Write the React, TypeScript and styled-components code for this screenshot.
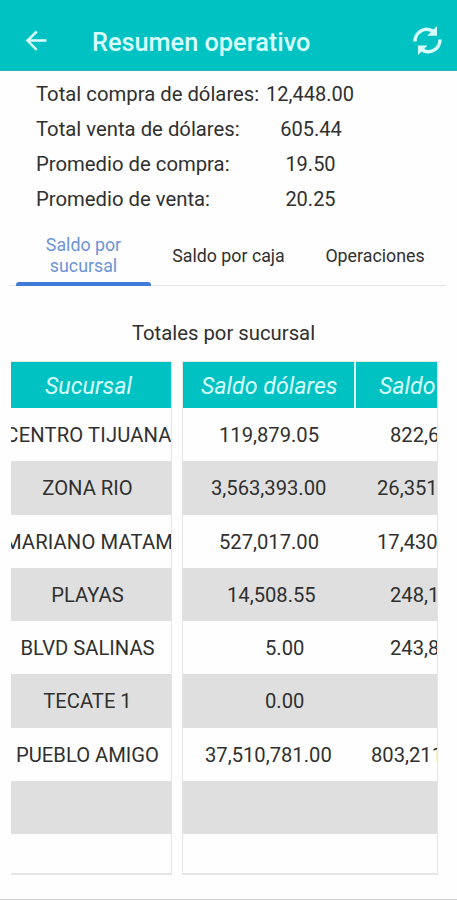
import React from "react";
import styled, { createGlobalStyle } from "styled-components";

const GlobalStyle = createGlobalStyle`
  * { box-sizing: border-box; }
  body { margin: 0; background: #fefefe; }
`;

const Screen = styled.div`
  display: flex;
  flex-direction: column;
  height: 900px;
  overflow: hidden;
  background: #fefefe;
  border-bottom: 1px solid #cfcfcf;
  color: #303030;
  font-family: Roboto, "Liberation Sans", sans-serif;
  font-size: 20.2px;
`;

const AppBar = styled.header`
  flex: none;
  display: flex;
  align-items: center;
  height: 71px;
  padding: 12px 14px 0 24px;
  background: #00c2c2;
  border-bottom: 1px solid #20b5b7;
  color: #d8ffff;
`;

const Title = styled.h1`
  flex: 1;
  margin: 3px 0 0 44px;
  font-size: 25.3px;
  font-weight: 500;
  line-height: 30px;
`;

const IconButton = styled.button`
  display: flex;
  padding: 0;
  border: 0;
  background: none;
  color: inherit;
`;

const Summary = styled.dl`
  flex: none;
  display: grid;
  grid-template-columns: 225px 98px;
  grid-auto-rows: 35px;
  align-items: center;
  margin: 5px 0 0 36px;
`;

const Label = styled.dt`
  font-size: 20.3px;
  white-space: nowrap;
`;

const Value = styled.dd<{ $nudge: number }>`
  margin: 0;
  padding-left: ${(p) => p.$nudge}px;
  font-size: 20px;
  text-align: center;
`;

const Tabs = styled.nav`
  flex: none;
  display: grid;
  grid-template-columns: 135px 155px 138px;
  height: 61px;
  margin: 9px 11px 0 9px;
  padding-left: 7px;
  border-bottom: 1px solid #e3e3e3;
`;

const Tab = styled.button<{ $active?: boolean }>`
  display: flex;
  align-items: center;
  justify-content: center;
  padding: 0;
  border: 0;
  background: none;
  font: inherit;
  font-size: 17.8px;
  line-height: 21px;
  color: ${(p) => (p.$active ? "#6d93d6" : "#303030")};
`;

const ActiveTab = styled(Tab)`
  position: relative;
  padding: 0 24px;
  &::after {
    content: "";
    position: absolute;
    left: 0;
    right: 0;
    bottom: -1px;
    height: 4px;
    border-radius: 3px 3px 0 0;
    background: #3f7bd8;
  }
`;

const Heading = styled.h2`
  flex: none;
  margin: 34px 0 0;
  padding-right: 10px;
  font-size: 20.3px;
  font-weight: 400;
  line-height: 26px;
  text-align: center;
`;

const Panels = styled.div`
  display: flex;
  gap: 10px;
  margin: 15px 19px 0 11px;
`;

const Panel = styled.section<{ $columns: string; $width: number; $open?: boolean }>`
  display: grid;
  grid-template-columns: ${(p) => p.$columns};
  grid-template-rows: 46px repeat(9, 53.25px);
  width: ${(p) => p.$width}px;
  height: 514px;
  overflow: hidden;
  border: solid #e6e6e6;
  border-width: 1px 1px 2px ${(p) => (p.$open ? 0 : 1)}px;
`;

const HeadCell = styled.div<{ $divided?: boolean; $indent: number }>`
  display: flex;
  align-items: center;
  padding: 2px 0 0 ${(p) => p.$indent}px;
  background: #00c2c2;
  border-right: ${(p) => (p.$divided ? "2px solid #d5f5f5" : "0")};
  color: #d8ffff;
  font-size: 23.2px;
  font-style: italic;
  white-space: nowrap;
`;

const Cell = styled.div<{ $shaded: boolean; $indent?: number }>`
  display: flex;
  align-items: center;
  padding-top: 1px;
  padding-left: ${(p) => p.$indent ?? 0}px;
  min-width: 0;
  overflow: hidden;
  background: ${(p) => (p.$shaded ? "#dfdfdf" : "#fefefe")};
  white-space: nowrap;
`;

const NameCell = styled(Cell)<{ $long: boolean }>`
  justify-content: center;
  padding-right: ${(p) => (p.$long ? 5 : 7)}px;
  letter-spacing: ${(p) => (p.$long ? 0.15 : 0)}px;
`;

const summary = [
  { label: "Total compra de dólares:", value: "12,448.00", nudge: 0 },
  { label: "Total venta de dólares:", value: "605.44", nudge: 2 },
  { label: "Promedio de compra:", value: "19.50", nudge: 1 },
  { label: "Promedio de venta:", value: "20.25", nudge: 1 },
];

type Branch = { name: string; dollars: string; pesos: string; dollarsAt: number; pesosAt: number };

const branches: Branch[] = [
  { name: "CENTRO TIJUANA", dollars: "119,879.05", pesos: "822,6", dollarsAt: 36, pesosAt: 34 },
  { name: "ZONA RIO", dollars: "3,563,393.00", pesos: "26,351", dollarsAt: 28, pesosAt: 21 },
  { name: "MARIANO MATAM", dollars: "527,017.00", pesos: "17,430", dollarsAt: 36, pesosAt: 21 },
  { name: "PLAYAS", dollars: "14,508.55", pesos: "248,1", dollarsAt: 44, pesosAt: 34 },
  { name: "BLVD SALINAS", dollars: "5.00", pesos: "243,8", dollarsAt: 82, pesosAt: 34 },
  { name: "TECATE 1", dollars: "0.00", pesos: "", dollarsAt: 82, pesosAt: 34 },
  { name: "PUEBLO AMIGO", dollars: "37,510,781.00", pesos: "803,211", dollarsAt: 22, pesosAt: 15 },
  { name: "", dollars: "", pesos: "", dollarsAt: 0, pesosAt: 0 },
  { name: "", dollars: "", pesos: "", dollarsAt: 0, pesosAt: 0 },
];

const BackIcon = () => (
  <svg width="24" height="24" viewBox="0 0 24 24" fill="none" stroke="currentColor" strokeWidth="2.5">
    <path d="M22.500 11.500H4M12.700 2.500 3.500 11.500l9.200 9.500" />
  </svg>
);

const RefreshIcon = () => (
  <svg width="31" height="32" viewBox="0 0 31 32">
    <path d="M3 16.500C3 6.500 13.500 1 21.500 6.500M28 14.500C28 24.500 17.500 30 9.500 24.500" fill="none" stroke="currentColor" strokeWidth="3.400" />
    <path d="M25 1v9.800h-9.800zM6 30V20.500H15.500z" fill="currentColor" />
  </svg>
);

export default function App() {
  return (
    <>
      <GlobalStyle />
      <Screen>
        <AppBar>
          <IconButton aria-label="Regresar"><BackIcon /></IconButton>
          <Title>Resumen operativo</Title>
          <IconButton aria-label="Actualizar"><RefreshIcon /></IconButton>
        </AppBar>
        <Summary>
          {summary.map((s) => (
            <React.Fragment key={s.label}>
              <Label>{s.label}</Label>
              <Value $nudge={s.nudge}>{s.value}</Value>
            </React.Fragment>
          ))}
        </Summary>
        <Tabs>
          <ActiveTab $active>Saldo por sucursal</ActiveTab>
          <Tab>Saldo por caja</Tab>
          <Tab>Operaciones</Tab>
        </Tabs>
        <Heading>Totales por sucursal</Heading>
        <Panels>
          <Panel $columns="160px" $width={161} $open>
            <HeadCell $indent={34}>Sucursal</HeadCell>
            {branches.map((b, i) => (
              <NameCell key={i} $shaded={i % 2 === 1} $long={b.name.length > 12}>{b.name}</NameCell>
            ))}
          </Panel>
          <Panel $columns="173px 140px" $width={256}>
            <HeadCell $divided $indent={18}>Saldo dólares</HeadCell>
            <HeadCell $indent={23}>Saldo</HeadCell>
            {branches.map((b, i) => (
              <React.Fragment key={i}>
                <Cell $shaded={i % 2 === 1} $indent={b.dollarsAt}>{b.dollars}</Cell>
                <Cell $shaded={i % 2 === 1} $indent={b.pesosAt}>{b.pesos}</Cell>
              </React.Fragment>
            ))}
          </Panel>
        </Panels>
      </Screen>
    </>
  );
}
